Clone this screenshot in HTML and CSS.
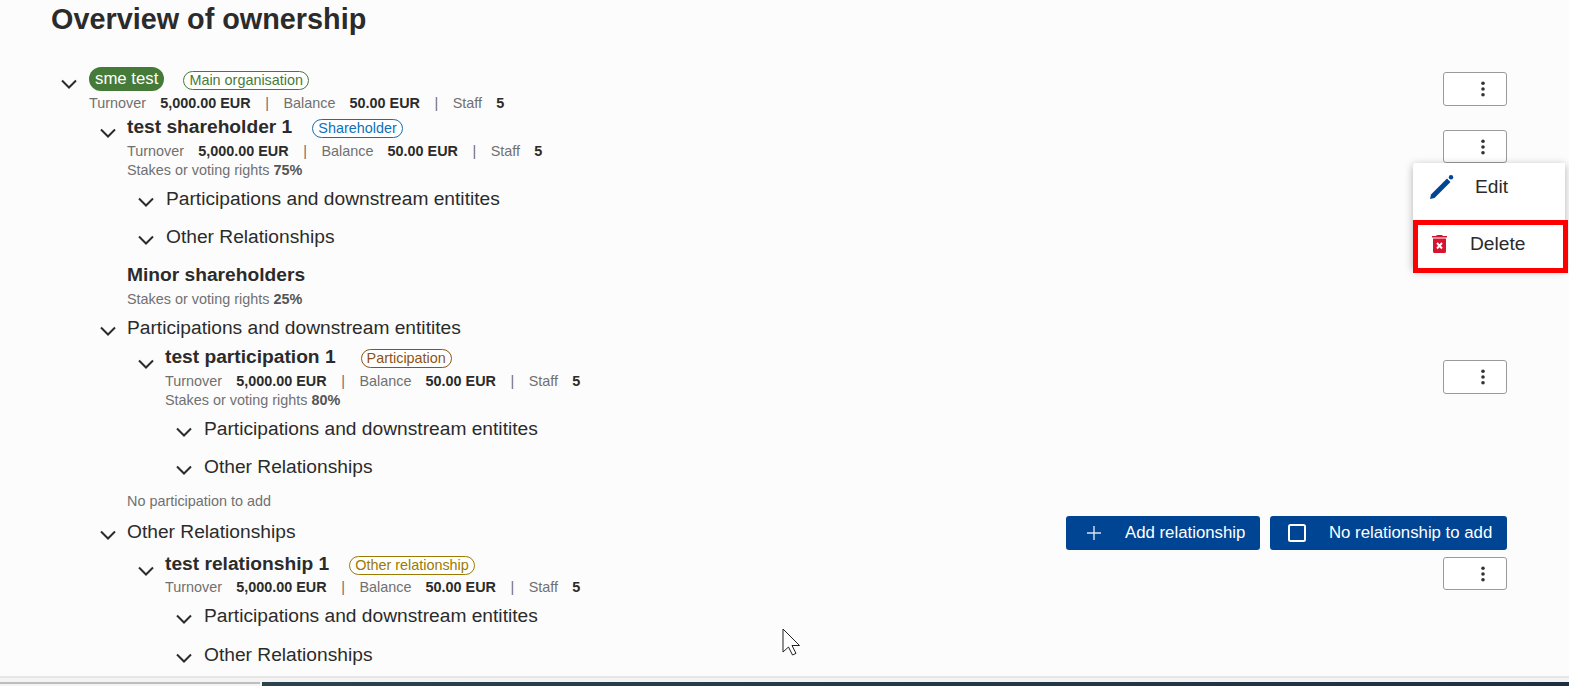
FILE: index.html
```html
<!DOCTYPE html>
<html>
<head>
    <meta charset="utf-8">
    <title>Overview of ownership</title>
    <link rel="stylesheet" href="styles.css">
</head>
<body>
    <svg class="sprites" width="0" height="0">
        <symbol id="chev" viewBox="0 0 18 10"><path d="M2 1.500 9 8.500l7-7" fill="none" stroke="currentColor" stroke-width="2"/></symbol>
        <symbol id="dots" viewBox="0 0 4 16"><circle cx="2" cy="2.200" r="1.800"/><circle cx="2" cy="8" r="1.800"/><circle cx="2" cy="13.800" r="1.800"/></symbol>
    </svg>

    <main class="page">
        <h1>Overview of ownership</h1>

        <div class="row row-main">
            <svg class="chev"><use href="#chev"/></svg>
            <div class="entity">
                <div class="head"><span class="name-pill">sme test</span><span class="tag tag-main">Main organisation</span></div>
                <div class="stats"><span>Turnover</span><b>5,000.00 EUR</b><i>|</i><span>Balance</span><b>50.00 EUR</b><i>|</i><span>Staff</span><b>5</b></div>
            </div>
            <button class="more"><svg class="dots"><use href="#dots"/></svg></button>
        </div>

        <div class="row row-share level-1">
            <svg class="chev"><use href="#chev"/></svg>
            <div class="entity">
                <div class="head"><span class="name">test shareholder 1</span><span class="tag tag-share">Shareholder</span></div>
                <div class="stats"><span>Turnover</span><b>5,000.00 EUR</b><i>|</i><span>Balance</span><b>50.00 EUR</b><i>|</i><span>Staff</span><b>5</b></div>
                <div class="stakes">Stakes or voting rights <b>75%</b></div>
            </div>
            <button class="more"><svg class="dots"><use href="#dots"/></svg></button>
        </div>

        <div class="section level-2 gap-a"><svg class="chev"><use href="#chev"/></svg>Participations and downstream entitites</div>
        <div class="section level-2 gap-b"><svg class="chev"><use href="#chev"/></svg>Other Relationships</div>

        <div class="minor">
            <div class="name">Minor shareholders</div>
            <div class="stakes">Stakes or voting rights <b>25%</b></div>
        </div>

        <div class="section level-1 gap-c"><svg class="chev"><use href="#chev"/></svg>Participations and downstream entitites</div>

        <div class="row row-part level-2">
            <svg class="chev"><use href="#chev"/></svg>
            <div class="entity">
                <div class="head"><span class="name">test participation 1</span><span class="tag tag-part">Participation</span></div>
                <div class="stats"><span>Turnover</span><b>5,000.00 EUR</b><i>|</i><span>Balance</span><b>50.00 EUR</b><i>|</i><span>Staff</span><b>5</b></div>
                <div class="stakes">Stakes or voting rights <b>80%</b></div>
            </div>
            <button class="more"><svg class="dots"><use href="#dots"/></svg></button>
        </div>

        <div class="section level-3"><svg class="chev"><use href="#chev"/></svg>Participations and downstream entitites</div>
        <div class="section level-3 gap-b"><svg class="chev"><use href="#chev"/></svg>Other Relationships</div>

        <div class="none-note">No participation to add</div>

        <div class="section level-1 gap-d">
            <svg class="chev"><use href="#chev"/></svg>Other Relationships
            <div class="actions">
                <button class="btn btn-add">
                    <svg width="16" height="16" viewBox="0 0 16 16"><path d="M8 1v14M1 8h14" stroke="#fff" stroke-width="1.400" fill="none" opacity=".85"/></svg>
                    Add relationship
                </button>
                <button class="btn btn-none">
                    <svg width="18" height="18" viewBox="0 0 18 18"><rect x="1" y="1" width="16" height="16" rx="1.500" fill="none" stroke="#fff" stroke-width="2"/></svg>
                    No relationship to add
                </button>
            </div>
        </div>

        <div class="row row-rel level-2">
            <svg class="chev"><use href="#chev"/></svg>
            <div class="entity">
                <div class="head"><span class="name">test relationship 1</span><span class="tag tag-rel">Other relationship</span></div>
                <div class="stats"><span>Turnover</span><b>5,000.00 EUR</b><i>|</i><span>Balance</span><b>50.00 EUR</b><i>|</i><span>Staff</span><b>5</b></div>
            </div>
            <button class="more"><svg class="dots"><use href="#dots"/></svg></button>
        </div>

        <div class="section level-3"><svg class="chev"><use href="#chev"/></svg>Participations and downstream entitites</div>
        <div class="section level-3 gap-e"><svg class="chev"><use href="#chev"/></svg>Other Relationships</div>
    </main>

    <div class="menu">
        <div class="menu-item menu-edit">
            <svg width="26" height="26" viewBox="0 0 26 26"><path d="M1 25 2 20.500 18 4.500 21.500 8 5.500 24z" fill="#004494"/><circle cx="22" cy="3.300" r="2.200" fill="#004494"/></svg>
            Edit
        </div>
        <div class="menu-item menu-delete">
            <svg width="15" height="18" viewBox="0 0 15 18"><path d="M5 0h5l1 1h4v1.500H0V1h4z" fill="#d5152f"/><path d="M1 3.500h13v13A1.500 1.500 0 0 1 12.500 18h-10A1.500 1.500 0 0 1 1 16.500z" fill="#d5152f"/><path d="M5 8l5 5.500M10 8l-5 5.500" stroke="#fff" stroke-width="1.900"/></svg>
            Delete
        </div>
    </div>
    <div class="highlight"></div>

    <svg class="cursor" width="20" height="28" viewBox="0 0 20 28"><path d="M1 1v23l5.500-5 4 8 3.500-1.600-4-7.900h7.500z" fill="#fff" stroke="#222" stroke-width="1"/></svg>

    <div class="scrollbar"><div class="scroll-track"></div><div class="scroll-thumb"></div></div>
</body>
</html>
```

FILE: styles.css
```css
* {
    box-sizing: border-box;
}
html, body {
    margin: 0;
    height: 686px;
    overflow: hidden;
}
body {
    position: relative;
    background-color: #fcfcfc;
    color: #2b2b2b;
    font-family: "Liberation Sans", Arial, sans-serif;
}
.sprites {
    position: absolute;
}
.page {
    padding: 0 62px 0 51px;
    height: 676px;
    overflow: hidden;
}
h1 {
    margin: 0;
    padding-top: 3px;
    height: 67px;
    font-size: 28.800px;
    line-height: 32px;
    font-weight: 700;
}
.chev {
    width: 18px;
    height: 10px;
    color: #2b2b2b;
    flex: none;
}
.row {
    display: flex;
    align-items: flex-start;
}
.row > .chev {
    margin-top: 14px;
    margin-right: 10px;
}
.entity {
    flex: 1;
}
.head {
    display: flex;
    align-items: center;
    height: 24px;
}
.level-1 {
    padding-left: 48px;
}
.level-2 {
    padding-left: 86px;
}
.level-3 {
    padding-left: 124px;
}
.row-main {
    padding-left: 9px;
    height: 47px;
}
.row-main > .chev {
    margin-top: 12px;
    margin-right: 11px;
}
.name-pill {
    background-color: #467a39;
    color: #fff;
    font-size: 16.800px;
    line-height: 24px;
    padding: 0 6px;
    border-radius: 12px;
}
.name {
    font-size: 19.200px;
    line-height: 24px;
    font-weight: 700;
}
.tag {
    font-size: 14.400px;
    line-height: 17px;
    height: 19px;
    margin-top: 3px;
    padding: 0 5px;
    border: 1px solid;
    border-radius: 10px;
    background-color: #fff;
}
.tag-main {
    margin-left: 19px;
    color: #467a39;
    border-color: #467a39;
}
.tag-share {
    margin-left: 20px;
    color: #0e70b8;
    border-color: #0e70b8;
}
.tag-part {
    margin-left: 25px;
    color: #8a5412;
    border-color: #8a5412;
}
.tag-rel {
    margin-left: 20px;
    color: #9a7a00;
    border-color: #9a7a00;
}
.stats {
    display: flex;
    margin-top: 3px;
    font-size: 14.400px;
    line-height: 18px;
    color: #707070;
}
.stats b {
    margin-left: 14.200px;
    color: #2b2b2b;
}
.stats i {
    font-style: normal;
    margin: 0 14.500px;
}
.stakes {
    font-size: 14.400px;
    line-height: 20px;
    color: #707070;
}
.stakes b {
    color: #555;
}
.more {
    flex: none;
    width: 64px;
    height: 34px;
    margin-top: 15px;
    padding: 0 0 0 15px;
    background-color: #fff;
    border: 1px solid #9a9a9a;
    border-radius: 3px;
}
.row-main .more {
    margin-top: 5px;
}
.dots {
    width: 4px;
    height: 16px;
    fill: #333;
    display: block;
    margin: 0 auto;
}
.row-share,
.row-part {
    height: 72px;
}
.row-share .head {
    height: 25px;
    padding-top: 1px;
}
.row-share .more {
    margin-top: 16px;
    height: 33px;
}
.section {
    display: flex;
    align-items: center;
    height: 24px;
    font-size: 19.200px;
    line-height: 24px;
}
.section > .chev {
    margin-right: 11px;
    margin-top: 5px;
}
.level-1 > .chev {
    margin-right: 10px;
}
.gap-a {
    margin-top: 1px;
}
.gap-b {
    margin-top: 14px;
}
.gap-c {
    margin-top: 8px;
}
.gap-d {
    margin-top: 10px;
}
.gap-e {
    margin-top: 15px;
}
.minor {
    padding-left: 76px;
    margin-top: 14px;
}
.minor .stakes {
    margin-top: 3px;
    line-height: 18px;
}
.row-part {
    margin-top: 5px;
}
.none-note {
    padding-left: 76px;
    margin-top: 13px;
    font-size: 14.400px;
    line-height: 18px;
    color: #707070;
}
.actions {
    margin-left: auto;
    margin-top: 2px;
    display: flex;
    gap: 10px;
}
.btn {
    display: flex;
    align-items: center;
    flex: none;
    height: 34px;
    background-color: #004494;
    color: #fff;
    border: 0;
    border-radius: 3px;
    font-family: inherit;
    font-size: 16.800px;
    white-space: nowrap;
}
.btn-add {
    padding: 0 0 0 20px;
    gap: 23px;
    width: 194px;
}
.btn-none {
    padding: 0 0 0 18px;
    gap: 23px;
    width: 237px;
}
.row-rel {
    margin-top: 8px;
    height: 52px;
}
.row-rel .stats {
    margin-top: 2px;
}
.row-rel .more {
    margin-top: 5px;
    height: 33px;
}
.menu {
    position: absolute;
    left: 1413px;
    top: 163px;
    width: 152px;
    height: 106px;
    background-color: #fff;
    box-shadow: 0 2px 8px rgba(0, 0, 0, .3);
    border-radius: 3px 0 0 3px;
}
.menu-item {
    position: absolute;
    display: flex;
    align-items: center;
    left: 0;
    right: 0;
    font-size: 19.200px;
    color: #2b2b2b;
}
.menu-edit {
    top: 11px;
    height: 26px;
    padding-left: 16px;
    gap: 20px;
}
.menu-delete {
    top: 71px;
    height: 20px;
    padding-left: 19px;
    gap: 23px;
}
.highlight {
    position: absolute;
    left: 1413px;
    top: 220px;
    width: 155px;
    height: 53px;
    border: 5px solid #f00;
}
.cursor {
    position: absolute;
    left: 782px;
    top: 628px;
}
.scrollbar {
    position: absolute;
    left: 0;
    right: 0;
    top: 676px;
    height: 10px;
    background-color: #f4f4f4;
    border-top: 2px solid #e6e6e6;
}
.scroll-track {
    position: absolute;
    left: 0;
    top: 4px;
    width: 260px;
    height: 2px;
    background-color: #bdbdbd;
}
.scroll-thumb {
    position: absolute;
    left: 262px;
    right: 0;
    bottom: 0;
    height: 4px;
    background: linear-gradient(to right, #2a434d, #1e2f42);
}
```
